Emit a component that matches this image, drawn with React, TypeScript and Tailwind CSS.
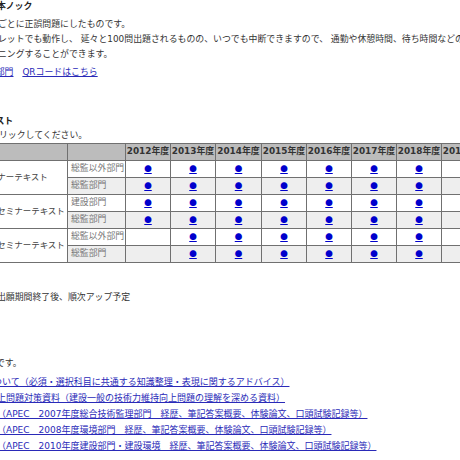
import React from 'react';

type Row = { group?: string; sub: string; dots: boolean[]; even: boolean };

const years = ['2012年度', '2013年度', '2014年度', '2015年度', '2016年度', '2017年度', '2018年度', '2019年度'];

const all = [true, true, true, true, true, true, true, false];
const later = [false, true, true, true, true, true, true, false];

const rows: Row[] = [
  { group: 'セミナーテキスト', sub: '総監以外部門', dots: all, even: false },
  { sub: '総監部門', dots: all, even: true },
  { group: '筆記試験セミナーテキスト', sub: '建設部門', dots: all, even: false },
  { sub: '総監部門', dots: all, even: true },
  { group: '口頭試験セミナーテキスト', sub: '総監以外部門', dots: later, even: false },
  { sub: '総監部門', dots: later, even: true },
];

function Dot() {
  return (
    <a href="#" className="text-[#0000cc] underline font-['Noto_Sans_CJK_JP',sans-serif] text-[7.5px] leading-none">
      ●
    </a>
  );
}

function Link({ children }: { children: React.ReactNode }) {
  return (
    <a href="#" className="text-[#2a2ab8] underline">
      {children}
    </a>
  );
}

export default function App() {
  return (
    <div className="w-[460px] h-[460px] overflow-hidden bg-white text-[#333] font-['DejaVu_Sans','Noto_Sans_CJK_JP',sans-serif] text-[8.9px] whitespace-nowrap">
      {/* Section 1 */}
      <div className="-ml-[11.9px] leading-[13px] font-bold text-[#222]">千本ノック</div>
      <div className="mt-[4px] -ml-[2px] leading-[15px]">
        <div>ごとに正誤問題にしたものです。</div>
        <div>レットでも動作し、 延々と100問出題されるものの、いつでも中断できますので、 通勤や休憩時間、待ち時間などの隙間時間で</div>
        <div>ニングすることができます。</div>
      </div>
      <div className="mt-[3px] -ml-[22px] leading-[15px]">
        <Link>建設部門</Link>　<Link>QRコードはこちら</Link>
      </div>

      {/* Section 2 */}
      <div className="mt-[34px] -ml-[22px] leading-[14px] font-bold text-[#222]">テキスト</div>
      <div className="-ml-[1px] leading-[14px]">リックしてください。</div>

      <div className="mt-px -ml-[40px] w-max grid grid-cols-[106px_57px_44px_44px_45px_44px_44px_44px_44px_44px] auto-rows-[16px] gap-px p-px bg-[#707070]">
        <div className="bg-[#bcbcbc]" />
        <div className="bg-[#bcbcbc]" />
        {years.map((y) => (
          <div key={y} className="bg-[#bcbcbc] flex items-center justify-center font-bold text-[#333]">
            {y}
          </div>
        ))}
        {rows.map((r, i) => (
          <React.Fragment key={i}>
            {r.group && (
              <div className="row-span-2 bg-white flex items-center justify-center text-[8.5px] text-[#444]">
                {r.group}
              </div>
            )}
            <div className={`${r.even ? 'bg-[#eeeeee]' : 'bg-white'} flex items-center pl-[3px] text-[#777]`}>
              {r.sub}
            </div>
            {r.dots.map((d, j) => (
              <div key={j} className={`${r.even ? 'bg-[#eeeeee]' : 'bg-white'} flex items-center justify-center`}>
                {d && <Dot />}
              </div>
            ))}
          </React.Fragment>
        ))}
      </div>

      {/* Section 3 */}
      <div className="mt-[27px] -ml-[3px] leading-[15px]">出願期間終了後、順次アップ予定</div>
      <div className="mt-[51px] -ml-[4px] leading-[15px]">です。</div>
      <div className="mt-[3px] text-[9px] leading-[16px]">
        <div className="-ml-[16px]">
          <Link>について（必須・選択科目に共通する知識整理・表現に関するアドバイス）</Link>
        </div>
        <div className="-ml-[12px]">
          <Link>向上問題対策資料（建設一般の技術力維持向上問題の理解を深める資料）</Link>
        </div>
        <div className="-ml-[3px]">
          <Link>（APEC　2007年度総合技術監理部門　経歴、筆記答案概要、体験論文、口頭試験記録等）</Link>
        </div>
        <div className="-ml-[3px]">
          <Link>（APEC　2008年度環境部門　経歴、筆記答案概要、体験論文、口頭試験記録等）</Link>
        </div>
        <div className="-ml-[3px]">
          <Link>（APEC　2010年度建設部門・建設環境　経歴、筆記答案概要、体験論文、口頭試験記録等）</Link>
        </div>
      </div>
    </div>
  );
}
